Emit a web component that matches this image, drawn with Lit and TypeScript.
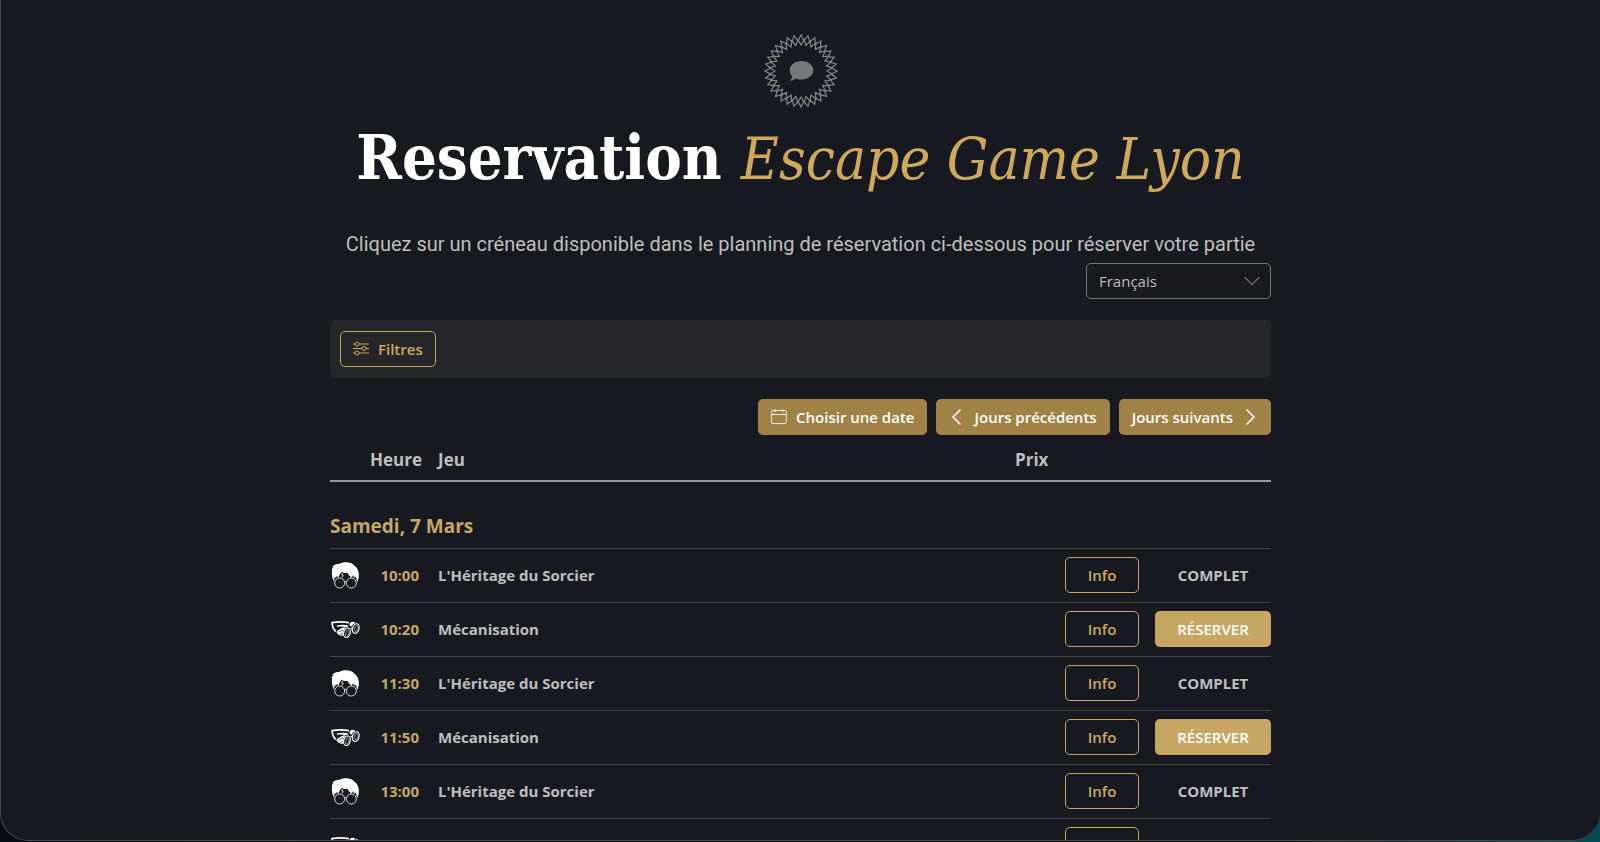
import { LitElement, html, css, svg } from "lit";
import { customElement, state } from "lit/decorators.js";

interface Slot {
  time: string;
  game: "sorcier" | "meca";
  free: boolean;
}

const GAMES = {
  sorcier: "L'Héritage du Sorcier",
  meca: "Mécanisation",
};

const star = (points: number, outer: number, inner: number, phase: number) => {
  const out: string[] = [];
  for (let i = 0; i < points * 2; i++) {
    const r = i % 2 ? inner : outer;
    const a = ((i + phase) * Math.PI) / points;
    out.push(`${(37 + r * Math.sin(a)).toFixed(2)},${(37 - r * Math.cos(a)).toFixed(2)}`);
  }
  return out.join(" ");
};

const badge = html`<svg class="badge" viewBox="0 0 74 74" aria-hidden="true">
  <g fill="none" stroke="#85868a" stroke-width="1.200">
    <polygon points=${star(32, 36, 30.5, 0)} />
    <polygon points=${star(32, 31.5, 26, 1)} />
  </g>
  <path
    fill="#77787b"
    d="M37.500 27c6.600 0 11.800 4.100 11.800 9.300s-5.200 9.300-11.800 9.300c-2.200 0-4.300-.4-6-1.200-1.400 1.700-3.200 2.400-5.400 2.400 1.100-1.200 1.900-2.900 2-4.500-1.500-1.600-2.400-3.700-2.400-6 0-5.200 5.200-9.300 11.800-9.300z"
  />
</svg>`;

const sorcerer = svg`<svg class="game-icon" viewBox="-1 -1 87 81" aria-hidden="true">
  <path fill="#fff" d="M8 58C2 46 0 32 3 23L0 24C2 19 5 16 8 14L2 15C8 6 17 5 23 5C37-3 60-2 70 10C83 19 87 42 77 60L75 47L71 42L69 48L65 38L61 47L52 38L49 31C43 33 36 31 31 28C27 33 24 37 21 47L17 40L14 47L10 43Z"/>
  <path fill="none" stroke="#fff" stroke-width="2.500" d="M35 31L31 38L36 40L31 46"/>
  <g fill="#161920" stroke="#d5d5d5" stroke-width="3">
    <circle cx="25" cy="62" r="15"/><circle cx="60" cy="62" r="15"/>
    <path d="M39 59q3.500-3 7 0" fill="none"/>
  </g>
</svg>`;

const goggles = svg`<svg class="game-icon" viewBox="-1 -15 89 82" aria-hidden="true">
  <path fill="none" stroke="#fff" stroke-width="5" stroke-linejoin="round" d="M54 5C38 2 18 2 2 5C3 17 7 27 14 32"/>
  <path fill="#fff" d="M17 14C30 10 42 11 53 14L48 19C38 17 27 16 17 18ZM15 34C24 24 35 19 43 19L37 30L36 45L28 45L20 40ZM55 10C58 2 66 0 74 5L66 11L61 18Z"/>
  <path stroke="#161920" stroke-width="2" fill="none" d="M22 34L36 28M27 42L36 37"/>
  <g fill="#161920" stroke="#fff" stroke-width="3.500">
    <ellipse cx="48" cy="36" rx="10" ry="15" transform="rotate(16 48 36)"/>
    <ellipse cx="75" cy="23" rx="10" ry="15" transform="rotate(16 75 23)"/>
    <ellipse cx="49" cy="37" rx="5" ry="10" transform="rotate(16 49 37)" stroke-width="1.500"/>
    <ellipse cx="76" cy="23" rx="5" ry="10" transform="rotate(16 76 23)" stroke-width="1.500"/>
    <path d="M59 25l6-4"/>
  </g>
</svg>`;

const sliders = html`<svg class="icon" viewBox="0 0 16 16" aria-hidden="true">
  <g fill="none" stroke="currentColor">
    <path d="M0 3h2M6 3h10M0 7.500h9M13 7.500h3M0 12h2M6 12h10" />
    <circle cx="4" cy="3" r="2" /><circle cx="11" cy="7.500" r="2" /><circle cx="4" cy="12" r="2" />
  </g>
</svg>`;

const calendar = html`<svg class="icon" viewBox="0 0 16 16" aria-hidden="true">
  <path
    fill="none"
    stroke="currentColor"
    stroke-opacity="0.85"
    d="M2 1.500h12a1.300 1.300 0 0 1 1.300 1.300v10.500a1.300 1.300 0 0 1-1.300 1.300H2A1.300 1.300 0 0 1 .7 13.300v-10.500A1.300 1.300 0 0 1 2 1.500zM.7 5.500h14.600M4 0v3.500M12 0v3.500"
  />
</svg>`;

const chevron = (d: string) => html`<svg class="icon" viewBox="0 0 16 16" aria-hidden="true">
  <path fill="none" stroke="currentColor" stroke-width="1.600" stroke-linecap="round" stroke-linejoin="round" d=${d} />
</svg>`;

@customElement("app-root")
export class AppRoot extends LitElement {
  @state() private slots: Slot[] = [
    { time: "10:00", game: "sorcier", free: false },
    { time: "10:20", game: "meca", free: true },
    { time: "11:30", game: "sorcier", free: false },
    { time: "11:50", game: "meca", free: true },
    { time: "13:00", game: "sorcier", free: false },
    { time: "13:20", game: "meca", free: false },
  ];

  static styles = css`
    :host {
      display: block;
      height: 100vh;
      overflow: hidden;
      background: linear-gradient(90deg, #020d15, #111 20%, #111 80%, #054a52);
      font-family: "Open Sans", "Noto Sans", sans-serif;
      font-size: 15px;
      line-height: 20px;
      color: #bfbfbf;
    }
    * {
      box-sizing: border-box;
    }
    .window {
      height: calc(100vh - 1px);
      overflow: hidden;
      background: #161920;
      border: solid #47484b;
      border-width: 0 0 1px 1px;
      border-radius: 0 0 28px 28px;
    }
    .page {
      max-width: 973px;
      margin: 0 auto;
      padding: 34px 16px 0;
    }
    .hero {
      display: flex;
      flex-direction: column;
      align-items: center;
      text-align: center;
    }
    .badge {
      width: 74px;
      height: 74px;
    }
    .title {
      margin: 8px 0 0;
      font: bold 61px/84px "DejaVu Serif Condensed", "DejaVu Serif", serif;
      color: #fff;
    }
    .title em {
      font-weight: normal;
      font-size: 58px;
      color: #d0a85c;
    }
    .lead {
      margin: 28px 0 0;
      font: 20px/30px Roboto, "Liberation Sans", sans-serif;
    }
    .language {
      display: flex;
      justify-content: flex-end;
      margin-top: 4px;
    }
    .select-wrap {
      display: grid;
      align-items: center;
      width: 185px;
    }
    .select-wrap > * {
      grid-area: 1 / 1;
    }
    .select-wrap .icon {
      justify-self: end;
      margin-right: 11px;
      color: #66676a;
      pointer-events: none;
    }
    select {
      appearance: none;
      width: 100%;
      height: 36px;
      padding: 0 12px;
      font: inherit;
      color: inherit;
      background: #18191d;
      border: 1px solid #77787b;
      border-radius: 5px;
    }
    .filters {
      margin-top: 21px;
      padding: 11px 10px;
      background: #252629;
      border-radius: 5px;
    }
    .btn {
      display: inline-flex;
      align-items: center;
      justify-content: center;
      gap: 9px;
      height: 36px;
      padding: 0 12px 1px;
      font: 600 15px/20px "Open Sans", "Noto Sans", sans-serif;
      color: #fff;
      background: #a08246;
      border: 1px solid transparent;
      border-radius: 5px;
      white-space: nowrap;
      cursor: pointer;
    }
    .btn.outline {
      color: #d0a85c;
      background: transparent;
      border-color: #c8a55f;
    }
    .btn.book {
      width: 116px;
      background: #c8a765;
    }
    .btn.info {
      width: 74px;
    }
    .icon {
      flex: none;
      width: 16px;
      height: 16px;
    }
    .pager {
      display: flex;
      justify-content: flex-end;
      gap: 9px;
      margin-top: 21px;
    }
    .schedule {
      width: 100%;
      margin-top: 5px;
      border-spacing: 0;
      table-layout: fixed;
    }
    .schedule th,
    .schedule td {
      padding: 0;
      text-align: left;
    }
    .schedule thead th {
      height: 42px;
      font-size: 17px;
      border-bottom: 2px solid #98989a;
    }
    .schedule .date {
      height: 67px;
      padding-top: 22px;
      font-size: 19px;
      color: #c8a765;
      border-bottom: 1px solid #444548;
    }
    .schedule td {
      height: 54px;
      padding-bottom: 1px;
      font-weight: bold;
      border-bottom: 1px solid #444548;
    }
    .col-icon {
      width: 32px;
    }
    .col-time {
      width: 76px;
    }
    .col-price {
      width: 50px;
    }
    .col-info {
      width: 90px;
    }
    .col-action {
      width: 116px;
    }
    .schedule .time {
      padding-right: 16px;
      text-align: right;
    }
    .schedule td.time {
      padding-right: 19px;
      color: #c8a765;
    }
    .schedule .status {
      text-align: center;
    }
    .game-icon {
      display: block;
      width: 29px;
      height: 27px;
      margin-left: 1px;
    }
  `;

  private row(s: Slot) {
    return html`<tr>
      <td>${s.game === "sorcier" ? sorcerer : goggles}</td>
      <td class="time">${s.time}</td>
      <td>${GAMES[s.game]}</td>
      <td></td>
      <td><button class="btn outline info" type="button">Info</button></td>
      <td class="status">
        ${s.free ? html`<button class="btn book" type="button">RÉSERVER</button>` : "COMPLET"}
      </td>
    </tr>`;
  }

  render() {
    return html`<div class="window">
      <main class="page">
        <header class="hero">
          ${badge}
          <h1 class="title">Reservation <em>Escape Game Lyon</em></h1>
          <p class="lead">
            Cliquez sur un créneau disponible dans le planning de réservation ci-dessous pour réserver votre partie
          </p>
        </header>
        <div class="language">
          <label class="select-wrap">
            <select aria-label="Langue">
              <option>Français</option>
            </select>
            ${chevron("M1 4.500l7 7 7-7")}
          </label>
        </div>
        <div class="filters">
          <button class="btn outline" type="button">${sliders}Filtres</button>
        </div>
        <nav class="pager">
          <button class="btn" type="button">${calendar}Choisir une date</button>
          <button class="btn" type="button">${chevron("M11 1L4 8l7 7")}Jours précédents</button>
          <button class="btn" type="button">Jours suivants${chevron("M5 1l7 7-7 7")}</button>
        </nav>
        <table class="schedule">
          <colgroup>
            <col class="col-icon" />
            <col class="col-time" />
            <col />
            <col class="col-price" />
            <col class="col-info" />
            <col class="col-action" />
          </colgroup>
          <thead>
            <tr>
              <th></th>
              <th class="time" scope="col">Heure</th>
              <th scope="col">Jeu</th>
              <th scope="col">Prix</th>
              <th></th>
              <th></th>
            </tr>
          </thead>
          <tbody>
            <tr>
              <th class="date" colspan="6" scope="rowgroup">Samedi, 7 Mars</th>
            </tr>
            ${this.slots.map((s) => this.row(s))}
          </tbody>
        </table>
      </main>
    </div>`;
  }
}
